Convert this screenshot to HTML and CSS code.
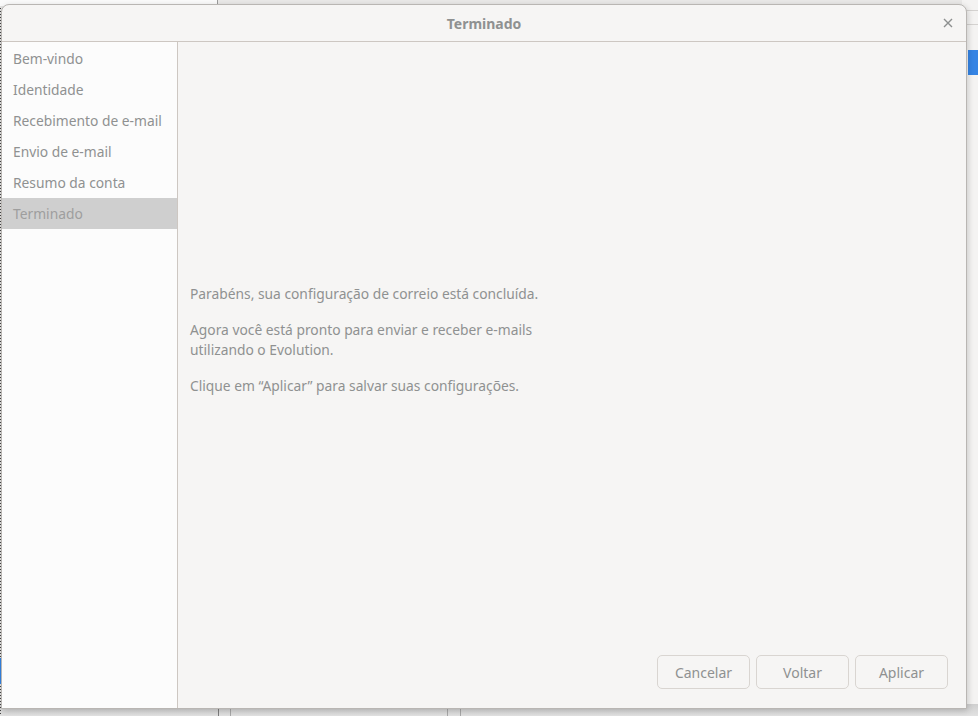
FILE: index.html
```html
<!DOCTYPE html>
<html lang="pt-BR">

<head>
    <meta charset="UTF-8">
    <title>Terminado</title>
    <link rel="stylesheet" href="styles.css">
</head>

<body>
    <div class="desktop">
        <div class="bg-top-left"></div>
        <div class="bg-top-right"></div>
        <div class="bg-side">
            <span class="bg-line bg-line-a"></span>
            <span class="bg-line bg-line-b"></span>
            <span class="bg-selected"></span>
        </div>
        <div class="bg-bottom">
            <span class="bg-col bg-col-a"></span>
            <span class="bg-col bg-col-b"></span>
            <span class="bg-col bg-col-c"></span>
            <span class="bg-col bg-col-d"></span>
        </div>
        <div class="bg-dots"></div>
        <div class="bg-blue-left"></div>

        <div class="dialog">
            <header class="headerbar">
                <span class="title">Terminado</span>
                <button class="close" aria-label="Fechar">
                    <svg width="10" height="10" viewBox="0 0 10 10">
                        <path d="M1 1 L9 9 M9 1 L1 9" stroke="#8d8f8f" stroke-width="1.4" fill="none" />
                    </svg>
                </button>
            </header>

            <div class="dialog-body">
                <nav class="sidebar">
                    <div class="step">Bem-vindo</div>
                    <div class="step">Identidade</div>
                    <div class="step">Recebimento de e-mail</div>
                    <div class="step">Envio de e-mail</div>
                    <div class="step">Resumo da conta</div>
                    <div class="step selected">Terminado</div>
                </nav>

                <main class="content">
                    <div class="message">
                        <p>Parabéns, sua configuração de correio está concluída.</p>
                        <p>Agora você está pronto para enviar e receber e-mails<br>utilizando o Evolution.</p>
                        <p>Clique em “Aplicar” para salvar suas configurações.</p>
                    </div>

                    <div class="actions">
                        <button class="btn">Cancelar</button>
                        <button class="btn">Voltar</button>
                        <button class="btn">Aplicar</button>
                    </div>
                </main>
            </div>
        </div>
    </div>
</body>

</html>
```

FILE: styles.css
```css
:root {
    --bg: #f6f5f4;
    --sidebar: #fcfcfc;
    --border: #cdc7c2;
    --text: #8f9191;
    --selected: #cfcfcf;
    --blue: #3584e4;
}

body {
    margin: 0;
    font-family: 'Noto Sans', 'DejaVu Sans', sans-serif;
    font-size: 13.8px;
    color: var(--text);
    overflow: hidden;
}

.desktop {
    position: relative;
    width: 978px;
    height: 716px;
    background: #e4e3e2;
    overflow: hidden;
}

/* windows behind the dialog */
.bg-top-left {
    position: absolute;
    left: 0;
    top: 0;
    width: 217px;
    height: 6px;
    background: #fafafa;
    border-right: 1px solid #9a9a9a;
}

.bg-top-right {
    position: absolute;
    left: 218px;
    top: 0;
    right: 0;
    height: 6px;
    background: #e9e8e7;
}

.bg-side {
    position: absolute;
    left: 962px;
    top: 0;
    right: 0;
    bottom: 0;
    background: #f4f3f2;
}

.bg-line {
    position: absolute;
    left: 0;
    right: 0;
    height: 1px;
    background: #d4d2d0;
}

.bg-line-a {
    top: 10px;
}

.bg-line-b {
    top: 24px;
}

.bg-selected {
    position: absolute;
    left: 6px;
    right: 0;
    top: 50px;
    height: 25px;
    background: var(--blue);
}

.bg-bottom {
    position: absolute;
    left: 0;
    right: 0;
    top: 704px;
    bottom: 0;
    background: linear-gradient(#cfcfcf, #e2e2e2);
}

.bg-col {
    position: absolute;
    top: 0;
    bottom: 0;
    width: 1px;
    background: #a8a8a8;
}

.bg-col-a {
    left: 218px;
    background: #7d7d7d;
}

.bg-col-b {
    left: 230px;
}

.bg-col-c {
    left: 447px;
}

.bg-col-d {
    left: 460px;
}

.bg-dots {
    position: absolute;
    left: 0;
    top: 8px;
    bottom: 0;
    width: 1px;
    background: repeating-linear-gradient(#444 0 1px, transparent 1px 3px);
}

.bg-blue-left {
    position: absolute;
    left: 0;
    top: 658px;
    width: 1px;
    height: 26px;
    background: var(--blue);
}

/* the dialog */
.dialog {
    position: absolute;
    left: 1px;
    top: 4px;
    width: 966px;
    height: 705px;
    box-sizing: border-box;
    border: 1px solid #b9b6b3;
    border-radius: 8px 8px 0 0;
    background: var(--bg);
    box-shadow: 1px 2px 6px rgba(0, 0, 0, 0.18);
    display: flex;
    flex-direction: column;
    overflow: hidden;
}

.headerbar {
    position: relative;
    height: 36px;
    flex-shrink: 0;
    border-bottom: 1px solid var(--border);
    display: flex;
    align-items: center;
    justify-content: center;
}

.title {
    font-weight: bold;
    font-size: 14px;
    color: var(--text);
}

.close {
    position: absolute;
    right: 13px;
    top: 13px;
    width: 10px;
    height: 10px;
    padding: 0;
    border: none;
    background: none;
    display: flex;
}

.dialog-body {
    flex-grow: 1;
    display: flex;
}

.sidebar {
    width: 175px;
    flex-shrink: 0;
    padding-top: 1px;
    background: var(--sidebar);
    border-right: 1px solid var(--border);
}

.step {
    height: 31px;
    line-height: 31px;
    padding-left: 11px;
    white-space: nowrap;
}

.step.selected {
    background: var(--selected);
    color: #9e9e9e;
}

.content {
    flex-grow: 1;
    display: flex;
    flex-direction: column;
    padding: 0 18px 19px 12px;
}

.message {
    flex-grow: 1;
    padding-top: 242px;
}

.message p {
    margin: 0 0 16px;
    line-height: 20px;
}

.actions {
    display: flex;
    justify-content: flex-end;
    gap: 6px;
}

.btn {
    width: 93px;
    height: 34px;
    border: 1px solid #d9d5d1;
    border-radius: 5px;
    background: var(--bg);
    font-family: inherit;
    font-size: 14px;
    color: var(--text);
}
```
